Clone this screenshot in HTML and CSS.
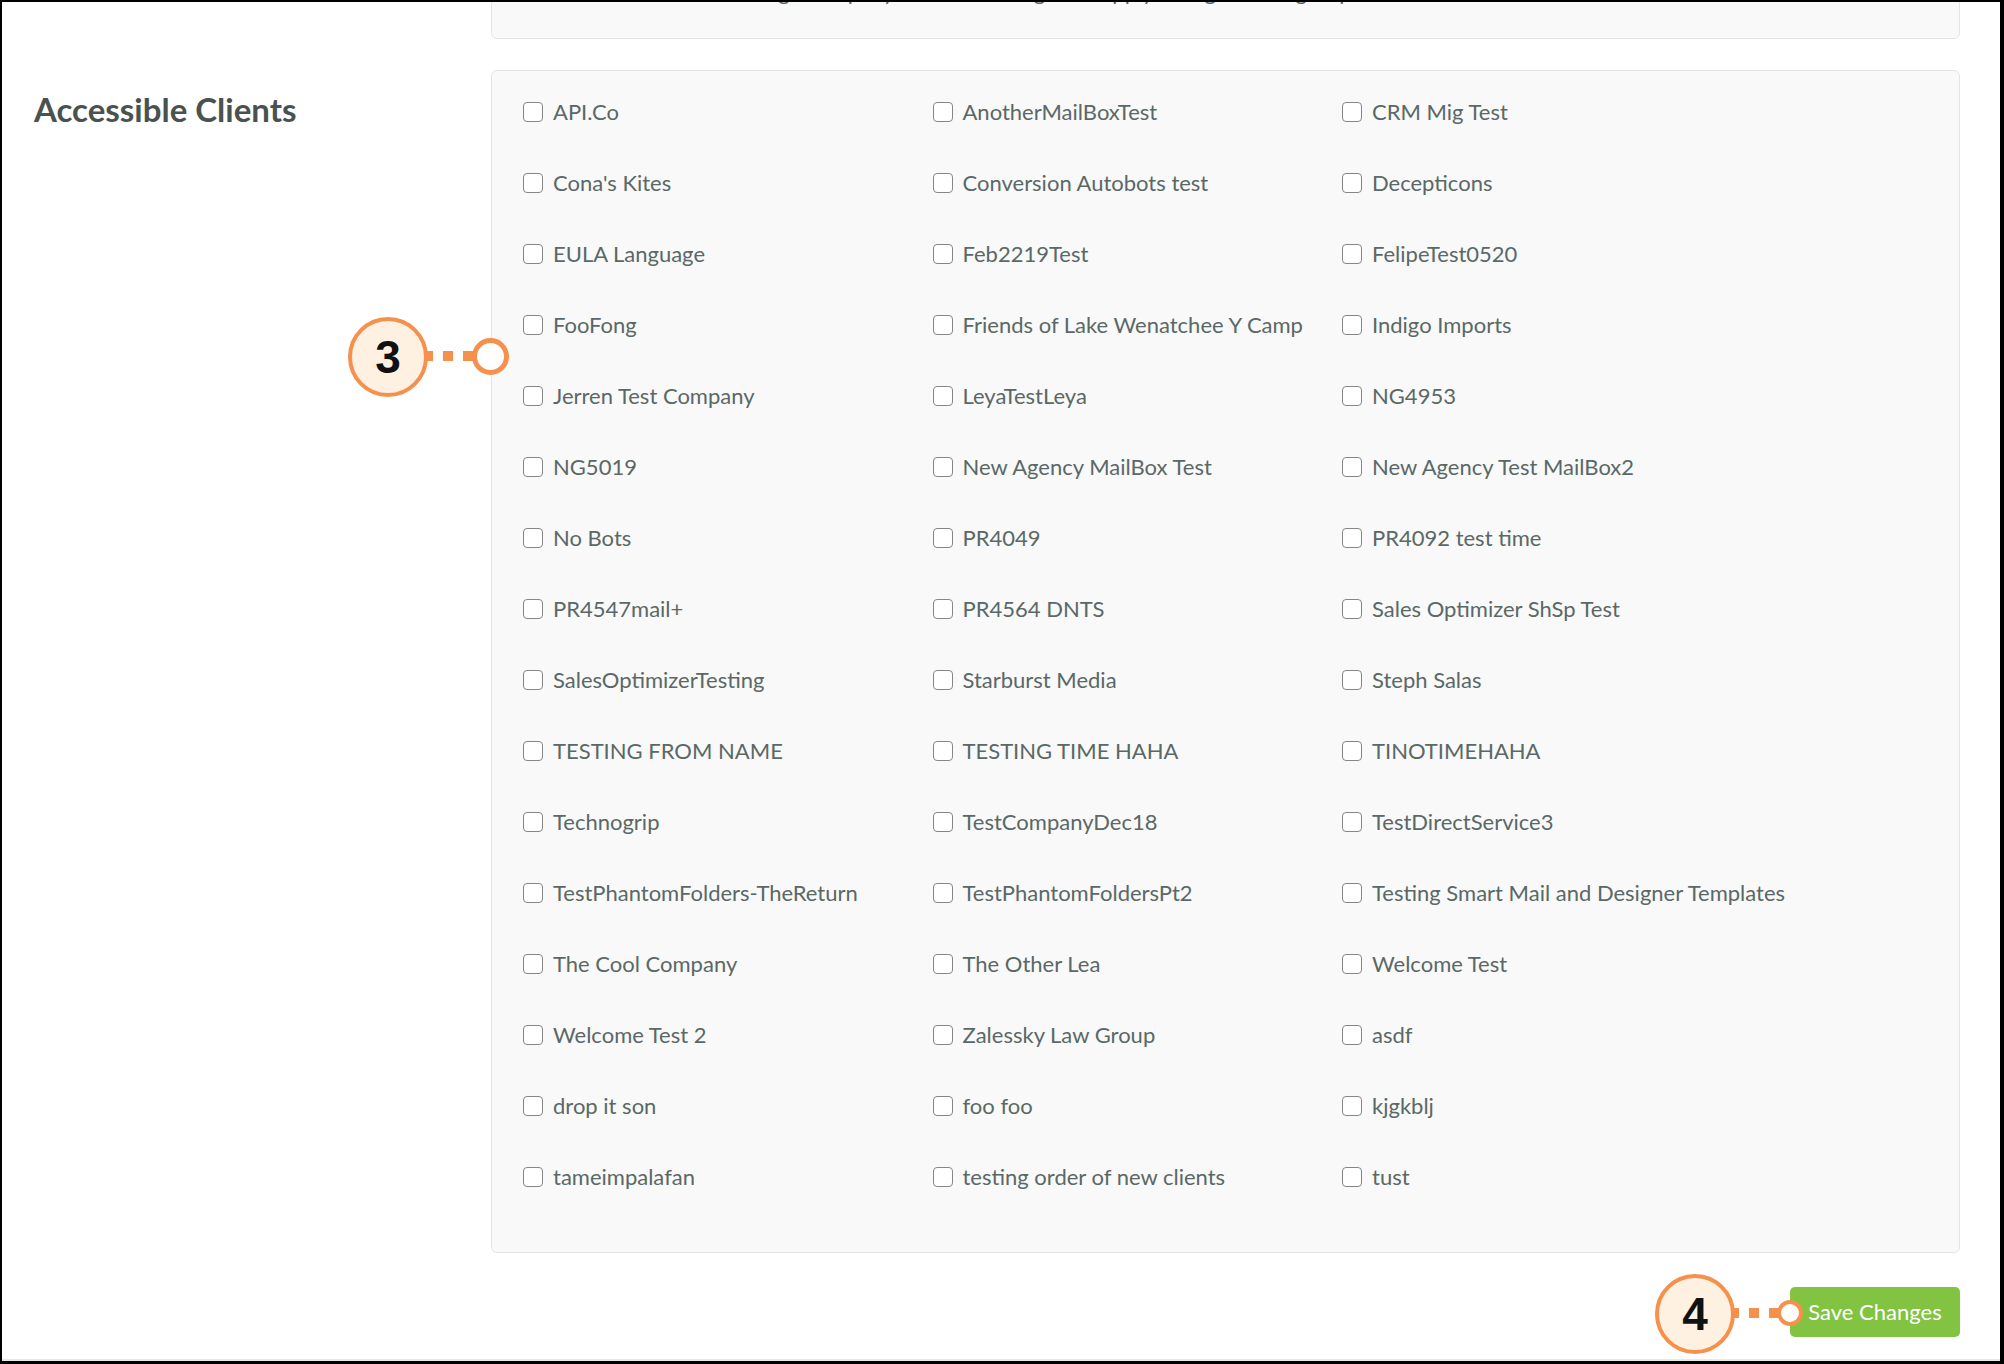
FILE: index.html
```html
<!DOCTYPE html>
<html lang="en">
<head>
  <meta charset="UTF-8" />
  <title>Accessible Clients</title>
  <link rel="stylesheet" href="styles.css">
</head>
<body>
<div class="frame">
  <div class="main">

    <!-- previous section, scrolled mostly out of view -->
    <div class="card card-top">
      <label class="client"><input type="checkbox"> Allow this user to manage company mailbox settings and apply changes to all groups</label>
    </div>

    <div class="section">
      <h2 class="section-title">Accessible Clients</h2>
      <div class="card">
        <div class="client-grid">
          <label class="client"><input type="checkbox"> API.Co</label>
          <label class="client"><input type="checkbox"> AnotherMailBoxTest</label>
          <label class="client"><input type="checkbox"> CRM Mig Test</label>
          <label class="client"><input type="checkbox"> Cona's Kites</label>
          <label class="client"><input type="checkbox"> Conversion Autobots test</label>
          <label class="client"><input type="checkbox"> Decepticons</label>
          <label class="client"><input type="checkbox"> EULA Language</label>
          <label class="client"><input type="checkbox"> Feb2219Test</label>
          <label class="client"><input type="checkbox"> FelipeTest0520</label>
          <label class="client"><input type="checkbox"> FooFong</label>
          <label class="client"><input type="checkbox"> Friends of Lake Wenatchee Y Camp</label>
          <label class="client"><input type="checkbox"> Indigo Imports</label>
          <label class="client"><input type="checkbox"> Jerren Test Company</label>
          <label class="client"><input type="checkbox"> LeyaTestLeya</label>
          <label class="client"><input type="checkbox"> NG4953</label>
          <label class="client"><input type="checkbox"> NG5019</label>
          <label class="client"><input type="checkbox"> New Agency MailBox Test</label>
          <label class="client"><input type="checkbox"> New Agency Test MailBox2</label>
          <label class="client"><input type="checkbox"> No Bots</label>
          <label class="client"><input type="checkbox"> PR4049</label>
          <label class="client"><input type="checkbox"> PR4092 test time</label>
          <label class="client"><input type="checkbox"> PR4547mail+</label>
          <label class="client"><input type="checkbox"> PR4564 DNTS</label>
          <label class="client"><input type="checkbox"> Sales Optimizer ShSp Test</label>
          <label class="client"><input type="checkbox"> SalesOptimizerTesting</label>
          <label class="client"><input type="checkbox"> Starburst Media</label>
          <label class="client"><input type="checkbox"> Steph Salas</label>
          <label class="client"><input type="checkbox"> TESTING FROM NAME</label>
          <label class="client"><input type="checkbox"> TESTING TIME HAHA</label>
          <label class="client"><input type="checkbox"> TINOTIMEHAHA</label>
          <label class="client"><input type="checkbox"> Technogrip</label>
          <label class="client"><input type="checkbox"> TestCompanyDec18</label>
          <label class="client"><input type="checkbox"> TestDirectService3</label>
          <label class="client"><input type="checkbox"> TestPhantomFolders-TheReturn</label>
          <label class="client"><input type="checkbox"> TestPhantomFoldersPt2</label>
          <label class="client"><input type="checkbox"> Testing Smart Mail and Designer Templates</label>
          <label class="client"><input type="checkbox"> The Cool Company</label>
          <label class="client"><input type="checkbox"> The Other Lea</label>
          <label class="client"><input type="checkbox"> Welcome Test</label>
          <label class="client"><input type="checkbox"> Welcome Test 2</label>
          <label class="client"><input type="checkbox"> Zalessky Law Group</label>
          <label class="client"><input type="checkbox"> asdf</label>
          <label class="client"><input type="checkbox"> drop it son</label>
          <label class="client"><input type="checkbox"> foo foo</label>
          <label class="client"><input type="checkbox"> kjgkblj</label>
          <label class="client"><input type="checkbox"> tameimpalafan</label>
          <label class="client"><input type="checkbox"> testing order of new clients</label>
          <label class="client"><input type="checkbox"> tust</label>
        </div>
      </div>
    </div>

    <div class="actions">
      <button class="btn-save">Save Changes</button>
    </div>
  </div>
  <div class="page-end"></div>

  <!-- callouts -->
  <div class="callout-line line-3"></div>
  <div class="callout-num num-3">3</div>
  <div class="callout-dot dot-3"></div>

  <div class="callout-line line-4"></div>
  <div class="callout-num num-4">4</div>
  <div class="callout-dot dot-4"></div>
</div>
</body>
</html>
```

FILE: styles.css
```css
body {
  margin: 0;
  font-family: Lato, "Open Sans", Arial, sans-serif;
  background: #fff;
}

.frame {
  box-sizing: border-box;
  height: 1364px;
  border-style: solid;
  border-color: #000;
  border-width: 2px 4px 3px 2px;
  position: relative;
  overflow: hidden;
  display: flex;
  flex-direction: column;
}

.main {
  flex: 1;
  padding-right: 40px;
  min-height: 0;
}

.page-end {
  height: 2px;
  background: #e8e8e8;
}

.card {
  background: #f9f9f9;
  border: 1px solid #e4e4e4;
  border-radius: 6px;
  padding: 5px 0 40px 31px;
}

.card-top {
  margin: -47px 0 0 489px;
  padding: 0 0 11px 31px;
}

.section {
  display: flex;
  margin-top: 31px;
}

.section-title {
  box-sizing: border-box;
  width: 489px;
  flex: none;
  margin: 20px 0 0;
  padding-left: 32px;
  font-size: 33px;
  font-weight: bold;
  line-height: 1.2;
  color: #4a5250;
}

.section .card {
  flex: 1;
}

.client-grid {
  display: grid;
  grid-template-columns: repeat(3, 409.5px);
}

.client {
  display: flex;
  align-items: center;
  height: 71px;
  font-size: 22px;
  color: #5a6866;
  white-space: nowrap;
}

.client input {
  appearance: none;
  -webkit-appearance: none;
  box-sizing: border-box;
  width: 20px;
  height: 20px;
  margin: 0 10px 0 0;
  border: 1.5px solid #868686;
  border-radius: 4px;
  background: #fff;
  flex: none;
}

.actions {
  display: flex;
  justify-content: flex-end;
  margin-top: 34px;
}

.btn-save {
  box-sizing: border-box;
  width: 170px;
  height: 50px;
  background: #82c341;
  color: #fff;
  border: none;
  border-radius: 5px;
  font-family: Lato, Arial, sans-serif;
  font-size: 22px;
  padding: 0 0 2px;
  cursor: pointer;
}

/* callouts */
.callout-num {
  position: absolute;
  box-sizing: border-box;
  width: 80px;
  height: 80px;
  border: 4px solid #f5914d;
  border-radius: 50%;
  background: #fef1e1;
  display: flex;
  align-items: center;
  justify-content: center;
  font-family: "Liberation Sans", Arial, sans-serif;
  font-weight: bold;
  font-size: 46px;
  color: #111;
}

.callout-dot {
  position: absolute;
  box-sizing: border-box;
  border: 5px solid #f5914d;
  border-radius: 50%;
  background: #fff;
}

.callout-line {
  position: absolute;
  height: 10px;
  background: repeating-linear-gradient(90deg, #f5914d 0 10px, transparent 10px 20px);
}

.num-3 { left: 346px; top: 315px; }
.dot-3 { left: 470px; top: 336px; width: 37px; height: 37px; }
.line-3 { left: 421px; top: 349px; width: 54px; }

.num-4 { left: 1653px; top: 1272px; }
.dot-4 { left: 1775px; top: 1298px; width: 26px; height: 26px; border-width: 4px; }
.line-4 { left: 1727px; top: 1306px; width: 54px; }
```
